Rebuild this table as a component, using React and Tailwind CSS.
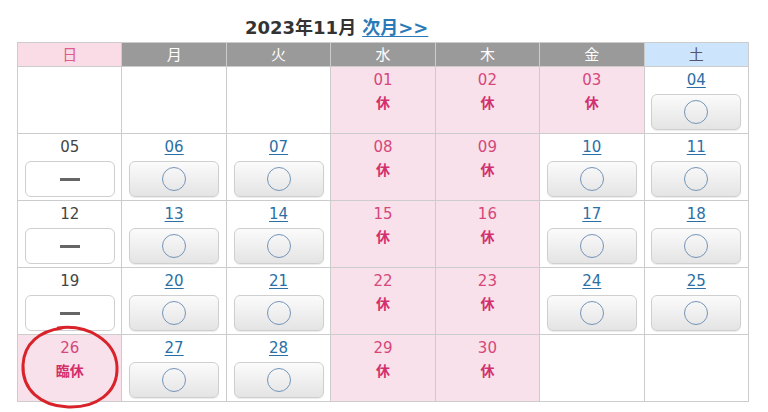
import React from 'react';

const HOLIDAY_COLS = [3, 4]; // 水, 木

const weeks = [
  [null, null, null, '01', '02', '03', '04'],
  ['05', '06', '07', '08', '09', '10', '11'],
  ['12', '13', '14', '15', '16', '17', '18'],
  ['19', '20', '21', '22', '23', '24', '25'],
  ['26', '27', '28', '29', '30', null, null],
];

const heads = ['日', '月', '火', '水', '木', '金', '土'];

const font = { fontFamily: '"DejaVu Sans", "Noto Sans CJK JP", sans-serif' };

function cellType(day, col) {
  if (!day) return 'empty';
  if (day === '26') return 'rinkyu';
  if (day === '01' || day === '02' || day === '03') return 'closed';
  if (HOLIDAY_COLS.includes(col)) return 'closed';
  if (col === 0) return 'sunday';
  return 'open';
}

const OkButton = () => (
  <div className="mx-auto mt-[4px] flex h-[36px] w-[90px] items-center justify-center rounded-[6px] border border-[#cfcfcf] bg-gradient-to-b from-[#fbfbfb] to-[#e4e4e4] shadow-[0_1px_1px_rgba(0,0,0,0.08)]">
    <div className="h-[24px] w-[24px] rounded-full border-[1.5px] border-[#7595b8]" />
  </div>
);

const DashButton = () => (
  <div className="mx-auto mt-[4px] flex h-[36px] w-[90px] items-center justify-center rounded-[6px] border border-[#cfcfcf] bg-white">
    <div className="h-[3px] w-[20px] bg-[#666]" />
  </div>
);

const Cell = ({ day, col }) => {
  const type = cellType(day, col);
  const pink = type === 'closed' || type === 'rinkyu';
  return (
    <td
      className={`h-[67px] border border-[#cccccc] p-0 align-top text-center ${pink ? 'bg-[#f8e1ea]' : 'bg-white'}`}
    >
      {type !== 'empty' && (
        <div className="pt-[3px]">
          {type === 'open' ? (
            <a className="block h-[20px] text-[15px] leading-[20px] text-[#2b6fa5] underline underline-offset-2">{day}</a>
          ) : (
            <div className={`h-[20px] text-[15px] leading-[20px] ${pink ? 'text-[#d4487c]' : 'text-[#444]'}`}>{day}</div>
          )}
          {type === 'open' && <OkButton />}
          {type === 'sunday' && <DashButton />}
          {pink && (
            <div className="mt-[3px] h-[20px] text-[14px] font-bold leading-[20px] text-[#d42f6d]">
              {type === 'rinkyu' ? '臨休' : '休'}
            </div>
          )}
        </div>
      )}
    </td>
  );
};

export default function App() {
  return (
    <div className="relative h-[412px] w-[768px] overflow-hidden bg-white" style={font}>
      <div className="ml-[17px] w-[732px] pt-[16px]">
        <div className="mb-[2px] flex h-[24px] items-center pl-[228px] text-[18px] font-bold leading-[24px] text-[#333]">
          <span>2023年11月</span>
          <a className="ml-[6px] text-[#2a7ab8] underline underline-offset-2">次月&gt;&gt;</a>
        </div>
        <table className="w-[732px] table-fixed border-collapse">
          <thead>
            <tr className="h-[24px]">
              {heads.map((h, i) => (
                <th
                  key={h}
                  className={`border border-[#cccccc] p-0 text-[15px] font-normal leading-[22px] ${
                    i === 0
                      ? 'bg-[#f9dce6] text-[#df5a8c]'
                      : i === 6
                      ? 'bg-[#cde5fc] text-[#556]'
                      : 'border-[#bbb] bg-[#9a9a9a] text-white'
                  }`}
                >
                  {h}
                </th>
              ))}
            </tr>
          </thead>
          <tbody>
            {weeks.map((w, r) => (
              <tr key={r}>
                {w.map((d, c) => (
                  <Cell key={c} day={d} col={c} />
                ))}
              </tr>
            ))}
          </tbody>
        </table>
      </div>
      {/* hand-drawn red circle around 26 */}
      <svg className="pointer-events-none absolute left-[18px] top-[323px]" width="104" height="88" viewBox="0 0 104 88">
        <path
          d="M40 5 C70 1 98 18 99 44 C100 70 78 85 50 84 C22 83 4 66 5 42 C6 20 22 8 44 5"
          fill="none"
          stroke="#d8232a"
          strokeWidth="3"
          strokeLinecap="round"
        />
      </svg>
    </div>
  );
}
